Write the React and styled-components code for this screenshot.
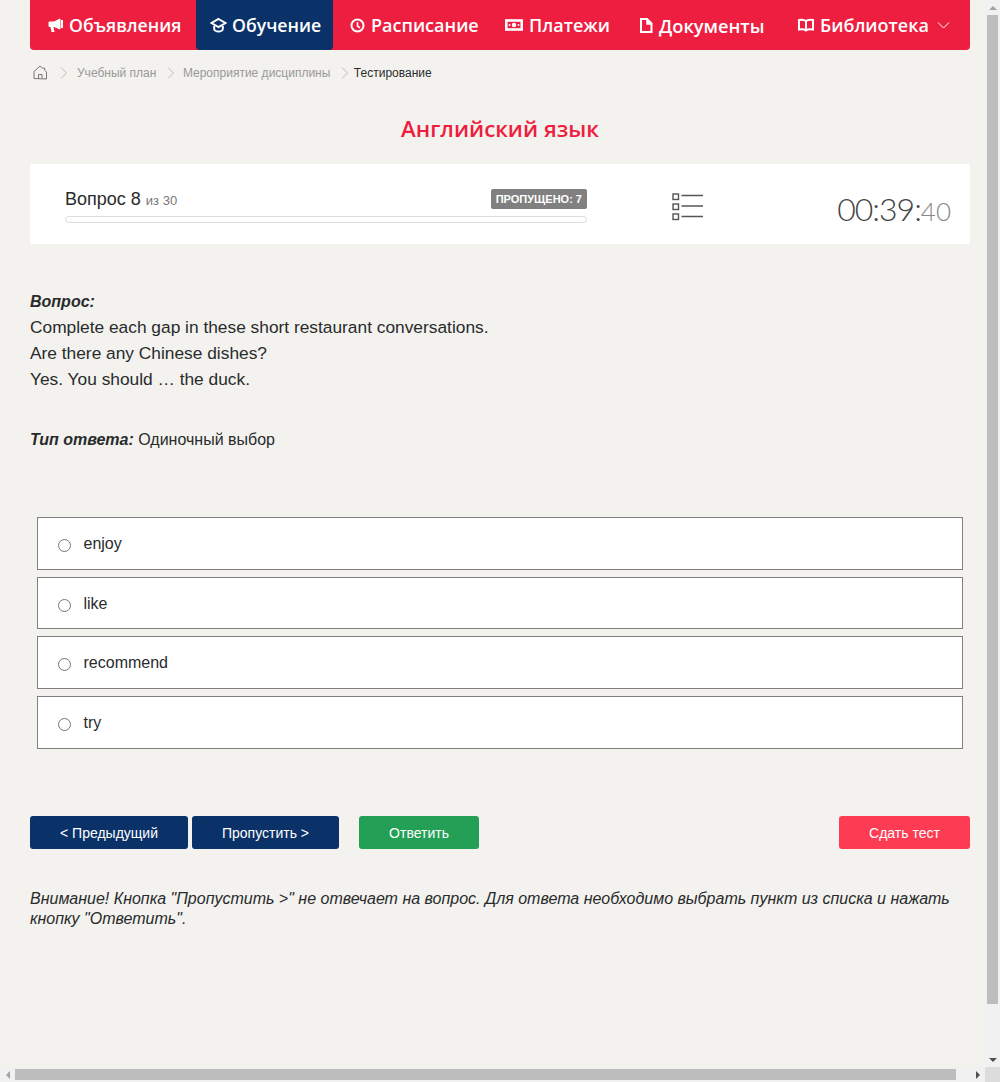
import React from "react";
import styled, { createGlobalStyle } from "styled-components";

const GlobalStyle = createGlobalStyle`
  html, body {
    overflow: hidden;
  }
  body {
    margin: 0;
    background: #f3f2ee;
    font-family: "Liberation Sans", Arial, sans-serif;
    color: #292b2c;
  }
`;

const Page = styled.div`
  box-sizing: border-box;
  width: 1000px;
  height: 1082px;
  padding: 0 30px;
`;

const Menu = styled.nav`
  display: grid;
  grid-template-columns: 162px 140px 155px 134px 159px 1fr;
  height: 50px;
  padding-left: 4px;
  background: #ed1e40;
  border-radius: 0 0 4px 4px;
`;

const MenuItem = styled.a`
  display: flex;
  align-items: center;
  justify-self: start;
  gap: ${p => p.$gap || 6}px;
  box-sizing: border-box;
  height: 50px;
  padding: 0 0 0 14px;
  width: ${p => (p.$active ? "137px" : "auto")};
  border-radius: 0 0 4px 4px;
  background: ${p => (p.$active ? "#0a3268" : "transparent")};
  color: #fff;
  font-family: "Open Sans", sans-serif;
  font-size: ${p => p.$size || 18}px;
  font-weight: 600;
  white-space: nowrap;
  svg {
    flex: none;
  }
`;

const MenuIcon = styled.svg`
  fill: none;
  stroke: currentColor;
  stroke-width: 2;
`;

const MenuChevron = styled(MenuIcon)`
  margin-left: 2px;
  stroke-width: 1;
`;

const Crumbs = styled.div`
  display: flex;
  align-items: center;
  height: 45px;
  padding-left: 3px;
  font-size: 12px;
  color: #999;
`;

const Crumb = styled.span`
  color: ${p => (p.$current ? "#292b2c" : "#999")};
`;

const CrumbSep = styled.svg`
  flex: none;
  margin: 0 ${p => p.$after}px 0 ${p => p.$before}px;
  fill: none;
  stroke: #bbb;
`;

const HomeIcon = styled.svg`
  flex: none;
  fill: none;
  stroke: #777;
`;

const Title = styled.h1`
  margin: 17px 0 18px;
  font-family: "Open Sans", sans-serif;
  font-size: 22.3px;
  line-height: 34px;
  font-weight: 600;
  color: #ed1e40;
  text-align: center;
`;

const Panel = styled.div`
  display: flex;
  align-items: center;
  height: 80px;
  padding: 0 19px 0 35px;
  background: #fff;
`;

const Progress = styled.div`
  width: 522px;
  margin-top: 4px;
`;

const ProgressHead = styled.div`
  display: flex;
  align-items: center;
  justify-content: space-between;
  height: 20px;
  margin-bottom: 7px;
`;

const QuestionNo = styled.div`
  font-size: 18px;
  small {
    font-size: 13px;
    color: #777;
  }
`;

const Badge = styled.span`
  padding: 0 5px;
  line-height: 20px;
  border-radius: 2px;
  background: #808080;
  color: #fff;
  font-size: 11px;
  font-weight: 700;
`;

const Track = styled.div`
  box-sizing: border-box;
  height: 7px;
  border: 1px solid #ddd;
  border-radius: 4px;
`;

const ListIcon = styled.svg`
  margin: 5px 0 0 85px;
  fill: none;
  stroke: #555;
  stroke-width: 1.4;
`;

const Timer = styled.div`
  margin-left: auto;
  padding-top: 8px;
  font-family: Lato, sans-serif;
  font-weight: 300;
  font-size: 32px;
  letter-spacing: -1px;
  color: #444;
  small {
    font-size: 26px;
    letter-spacing: 0;
    color: #888;
  }
`;

const Question = styled.div`
  margin-top: 45px;
  font-size: 17.33px;
  line-height: 26px;
`;

const QuestionLabel = styled.div`
  font-size: 16px;
  line-height: 25px;
  font-weight: 700;
  font-style: italic;
`;

const AnswerType = styled.div`
  margin-top: 36px;
  font-size: 16px;
  line-height: 24px;
  b {
    font-style: italic;
  }
`;

const Options = styled.div`
  display: flex;
  flex-direction: column;
  gap: 7px;
  margin: 65.3px 7px 0;
`;

const Option = styled.label`
  display: flex;
  align-items: center;
  box-sizing: border-box;
  height: 52.6px;
  padding: 1px 0 0 20px;
  border: 1px solid #808080;
  background: #fff;
  font-size: 16px;
  input {
    width: 13px;
    height: 13px;
    margin: 3px 12.5px 0 0;
  }
`;

const Actions = styled.div`
  display: flex;
  margin-top: 67.7px;
`;

const Button = styled.button`
  width: ${p => p.$w}px;
  height: 33px;
  margin: 0 ${p => p.$gap || 0}px 0 ${p => (p.$push ? "auto" : "0")};
  padding: 0;
  border: 0;
  border-radius: 3px;
  background: ${p => p.$bg};
  color: #fff;
  font-family: "Liberation Sans", Arial, sans-serif;
  font-size: 14px;
`;

const Notice = styled.p`
  margin: 40px 0 0;
  font-size: 16px;
  line-height: 20px;
  font-style: italic;
`;

// the browser's own scrollbars, as the reference shows them
const VScroll = styled.div`
  position: fixed;
  top: 0;
  right: 0;
  bottom: 15px;
  width: 15px;
  display: flex;
  flex-direction: column;
  align-items: center;
  justify-content: space-between;
  background: #f1f1f1;
`;

const HScroll = styled.div`
  position: fixed;
  left: 0;
  bottom: 0;
  width: 985px;
  height: 15px;
  display: flex;
  align-items: center;
  justify-content: space-between;
  background: #f1f1f1;
`;

const Corner = styled.div`
  position: fixed;
  right: 0;
  bottom: 0;
  width: 15px;
  height: 15px;
  background: #dcdcdc;
`;

const VThumb = styled.div`
  width: 11px;
  height: 989px;
  margin-bottom: auto;
  background: #bdbdbd;
`;

const HThumb = styled.div`
  width: 941px;
  height: 11px;
  margin-right: auto;
  background: #bdbdbd;
`;

const ArrowBox = styled.div`
  flex: none;
  display: flex;
  align-items: center;
  justify-content: center;
  width: 15px;
  height: 15px;
`;

const arrowShape = {
  up: c => `border-width: 0 4px 4px; border-color: transparent transparent ${c};`,
  down: c => `border-width: 4px 4px 0; border-color: ${c} transparent transparent;`,
  left: c => `border-width: 4px 4px 4px 0; border-color: transparent ${c} transparent transparent;`,
  right: c => `border-width: 4px 0 4px 4px; border-color: transparent transparent transparent ${c};`,
};

const Arrow = styled.i`
  width: 0;
  height: 0;
  border-style: solid;
  ${p => arrowShape[p.$dir](p.$dim ? "#a3a3a3" : "#505050")}
`;

const options = ["enjoy", "like", "recommend", "try"];

const Chevron = ({ before, after }) => (
  <CrumbSep $before={before} $after={after} width="7" height="12" viewBox="0 0 7 12">
    <path d="M1 .5 6.500 6 1 11.500" />
  </CrumbSep>
);

export default function App() {
  return (
    <Page>
      <GlobalStyle />
      <Menu>
        <MenuItem $size={17.7}>
          <MenuIcon width="15" height="15" viewBox="0 0 15 15">
            <path d="M1 4h5l6-3v10L6 8.500H1Z" fill="currentColor" strokeWidth="1" />
            <path d="M2.500 9h3l1 5h-3Z" fill="currentColor" strokeWidth="0" />
            <path d="M14 2v8" />
          </MenuIcon>
          Объявления
        </MenuItem>
        <MenuItem $active $gap={5} $size={17.7}>
          <MenuIcon width="17" height="16" viewBox="0 0 17 16">
            <path d="M8.500 2 15.500 6 8.500 10 1.500 6Z" />
            <path d="M4.200 9v3c0 1.300 2 2.500 4.300 2.500s4.300-1.200 4.300-2.500V9" />
          </MenuIcon>
          Обучение
        </MenuItem>
        <MenuItem>
          <MenuIcon width="15" height="15" viewBox="0 0 15 15">
            <circle cx="7.500" cy="7.500" r="6" />
            <path d="M7.500 4v4l2.500 1.800" strokeWidth="1.600" />
          </MenuIcon>
          Расписание
        </MenuItem>
        <MenuItem>
          <MenuIcon width="18" height="12" viewBox="0 0 18 12">
            <rect x="1.250" y="1.500" width="15.500" height="9" strokeWidth="2.600" />
            <circle cx="9" cy="6" r="2.200" fill="currentColor" stroke="none" />
            <circle cx="4.500" cy="6" r="1" fill="currentColor" stroke="none" />
            <circle cx="13.500" cy="6" r="1" fill="currentColor" stroke="none" />
          </MenuIcon>
          Платежи
        </MenuItem>
        <MenuItem $size={18.3}>
          <MenuIcon width="14" height="15" viewBox="0 0 14 15">
            <path d="M2 1h6l4.500 4.500V14H2Z" />
            <path d="M8 1v5h4.500" strokeWidth="1.500" fill="currentColor" />
          </MenuIcon>
          Документы
        </MenuItem>
        <MenuItem>
          <MenuIcon width="16" height="15" viewBox="0 0 16 15">
            <path d="M8 3C6.500 1.800 3.500 1.500 1 2v9.500c2.500-.4 5.500-.2 7 1 1.500-1.200 4.500-1.400 7-1V2c-2.500-.5-5.500-.2-7 1Zm0 0v9.500" />
          </MenuIcon>
          Библиотека
          <MenuChevron width="13" height="8" viewBox="0 0 13 8">
            <path d="M1 1.500 6.500 7 12 1.500" />
          </MenuChevron>
        </MenuItem>
      </Menu>
      <Crumbs>
        <HomeIcon width="15" height="15" viewBox="0 0 15 15">
          <path d="M1 13.500V6.500L7 1l2.500 2.200 2-.2.500 2.500 1.500 1.500v7Z" />
          <path d="M5.500 13.500v-4h3.500v4" />
        </HomeIcon>
        <Chevron before={12} after={10} />
        <Crumb>Учебный план</Crumb>
        <Chevron before={11} after={8.5} />
        <Crumb>Мероприятие дисциплины</Crumb>
        <Chevron before={11} after={5.5} />
        <Crumb $current>Тестирование</Crumb>
      </Crumbs>
      <Title>Английский язык</Title>
      <Panel>
        <Progress>
          <ProgressHead>
            <QuestionNo>Вопрос 8 <small>из 30</small></QuestionNo>
            <Badge>ПРОПУЩЕНО: 7</Badge>
          </ProgressHead>
          <Track />
        </Progress>
        <ListIcon width="31" height="28" viewBox="0 0 31 28">
          <rect x="1" y="1" width="5.500" height="5.500" />
          <rect x="1" y="11" width="5.500" height="5.500" />
          <rect x="1" y="21" width="5.500" height="5.500" />
          <path d="M9.500 2.500H31M9.500 13H31M9.500 23.500H31" />
        </ListIcon>
        <Timer>00:39:<small>40</small></Timer>
      </Panel>
      <Question>
        <QuestionLabel>Вопрос:</QuestionLabel>
        Complete each gap in these short restaurant conversations.<br />
        Are there any Chinese dishes?<br />
        Yes. You should … the duck.
      </Question>
      <AnswerType><b>Тип ответа:</b> Одиночный выбор</AnswerType>
      <Options>
        {options.map(o => (
          <Option key={o}>
            <input type="radio" name="answer" />
            {o}
          </Option>
        ))}
      </Options>
      <Actions>
        <Button $w={158} $gap={4} $bg="#0a3268">&lt; Предыдущий</Button>
        <Button $w={147} $gap={20} $bg="#0a3268">Пропустить &gt;</Button>
        <Button $w={120} $bg="#23a056">Ответить</Button>
        <Button $w={131} $push $bg="#fd3c54">Сдать тест</Button>
      </Actions>
      <Notice>
        Внимание! Кнопка "Пропустить &gt;" не отвечает на вопрос. Для ответа необходимо выбрать пункт из списка и нажать кнопку "Ответить".
      </Notice>
      <VScroll>
        <ArrowBox><Arrow $dir="up" $dim /></ArrowBox>
        <VThumb />
        <ArrowBox><Arrow $dir="down" /></ArrowBox>
      </VScroll>
      <HScroll>
        <ArrowBox><Arrow $dir="left" $dim /></ArrowBox>
        <HThumb />
        <ArrowBox><Arrow $dir="right" /></ArrowBox>
      </HScroll>
      <Corner />
    </Page>
  );
}
